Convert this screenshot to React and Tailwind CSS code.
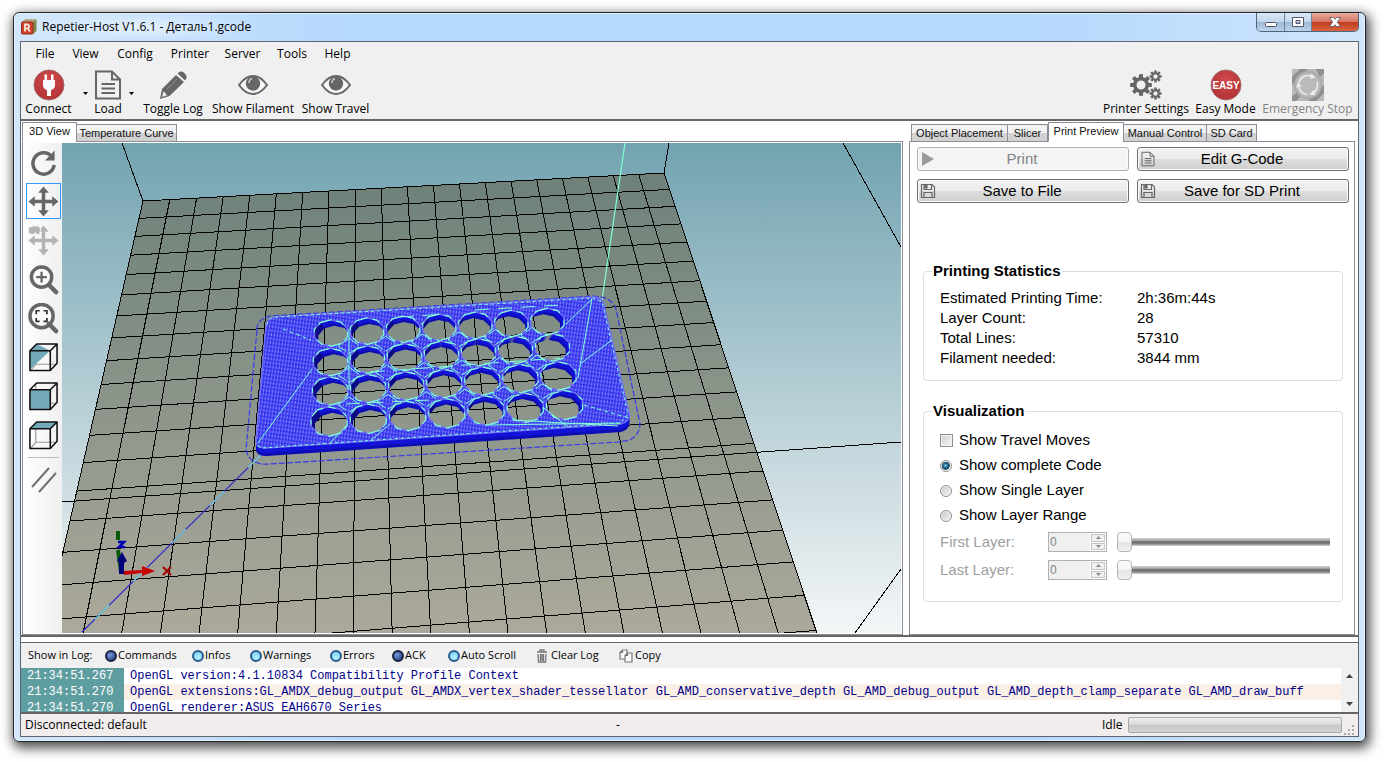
import { useState } from 'react'

const STATS = [
  ['Estimated Printing Time:', '2h:36m:44s'],
  ['Layer Count:', '28'],
  ['Total Lines:', '57310'],
  ['Filament needed:', '3844 mm'],
]

const LOG_LINES = [
  ['21:34:51.267', 'OpenGL version:4.1.10834 Compatibility Profile Context'],
  [
    '21:34:51.270',
    'OpenGL extensions:GL_AMDX_debug_output GL_AMDX_vertex_shader_tessellator GL_AMD_conservative_depth GL_AMD_debug_output GL_AMD_depth_clamp_separate GL_AMD_draw_buff',
  ],
  ['21:34:51.270', 'OpenGL renderer:ASUS EAH6670 Series'],
]

/* ---------- icons ---------- */

function AppIcon() {
  return (
    <svg className="w-4 h-4" viewBox="0 0 16 16">
      <path d="M1 3 L4 0.500 L15.500 0.500 L15.500 12 L12 15 L11 3 Z" fill="#7d8a4a" />
      <path d="M1 3 L4 0.500 L15.500 0.500 L12 3 Z" fill="#b9a183" />
      <rect x="0.5" y="3" width="11.5" height="12" rx="1" fill="#d0412b" stroke="#93301f" />
      <path d="M4 12.500 V5.500 H6.800 A2 2 0 0 1 6.800 9.300 H4 M6.500 9.300 L9 12.500" fill="none" stroke="#fbe9dc" strokeWidth="1.800" />
    </svg>
  )
}

function RedDisc({ children }) {
  return (
    <svg className="w-8 h-8" viewBox="0 0 32 32">
      <defs>
        <radialGradient id="disc" cx="0.5" cy="0.35" r="0.65">
          <stop offset="0" stopColor="#cf4a4c" />
          <stop offset="1" stopColor="#b43336" />
        </radialGradient>
      </defs>
      <circle cx="16" cy="16" r="15" fill="url(#disc)" stroke="#a5686a" strokeWidth="1" />
      {children}
    </svg>
  )
}

function DocIcon({ className }) {
  return (
    <svg className={className} viewBox="0 0 32 32" fill="none" stroke="#666" strokeWidth="2">
      <path d="M4 2.500 H20 L28 10.500 V29.500 H4 Z" />
      <path d="M20 2.500 V10.500 H28" />
      <path d="M9.500 15 H23 M9.500 19.500 H23 M9.500 24 H23" strokeWidth="2.200" />
    </svg>
  )
}

function PencilIcon() {
  return (
    <svg className="w-8 h-8" viewBox="0 0 32 32">
      <path d="M3 30 L5 20 L19 6 L27 13 L12.500 27 Z" fill="#666" />
      <path d="M20.500 4.500 L22.500 2.800 Q24.500 1.800 26.500 3.300 L29 6 Q30.500 8 29 10 L28 11.500 Z" fill="#666" />
      <path d="M5 28 L6.500 22.500 L8 23.500 L8.500 25 L10.500 26 Z" fill="#efefef" />
      <path d="M10 20 L20 10" stroke="#8a8a8a" strokeWidth="1" />
    </svg>
  )
}

function EyeIcon() {
  return (
    <svg className="w-8 h-8" viewBox="0 0 32 32">
      <path d="M2 16 Q8.500 7 16 7 Q23.500 7 30 16 Q23.500 25 16 25 Q8.500 25 2 16 Z" fill="#f7f7f7" stroke="#666" strokeWidth="2" />
      <circle cx="16" cy="14.500" r="7.200" fill="#666" />
      <path d="M12 14 Q12 10.500 15 9.500" fill="none" stroke="#c8c8c8" strokeWidth="1.500" />
    </svg>
  )
}

function Gear({ cx, cy, r, hole, tooth }) {
  const angles = [0, 45, 90, 135, 180, 225, 270, 315]
  return (
    <g transform={`translate(${cx} ${cy})`} fill="#666">
      {angles.map((a) => (
        <rect key={a} x={-tooth / 2} y={-r - tooth * 0.7} width={tooth} height={tooth * 1.3} transform={`rotate(${a})`} />
      ))}
      <circle r={(r + hole) / 2} fill="none" stroke="#666" strokeWidth={r - hole} />
    </g>
  )
}

function GearsIcon() {
  return (
    <svg className="w-8 h-8" viewBox="0 0 32 32">
      <Gear cx={11} cy={16} r={8} hole={4.5} tooth={4} />
      <Gear cx={25.5} cy={7.5} r={4.300} hole={2.200} tooth={2.500} />
      <Gear cx={25.5} cy={24.500} r={4.300} hole={2.200} tooth={2.500} />
    </svg>
  )
}

function StopIcon() {
  return (
    <svg className="w-8 h-8" viewBox="0 0 32 32">
      <rect width="32" height="32" fill="#b9b9b9" />
      <path d="M0 8 L8 0 H16 L0 16 Z M24 0 H32 L32 4 L28 8 Z M0 27 L5 24 L8 28 L4 32 H0 Z M16 32 L32 16 V24 L24 32 Z" fill="#8f8f8f" />
      <circle cx="16" cy="16" r="14" fill="#a9a9a9" />
      <circle cx="16" cy="16" r="12.500" fill="#bababa" />
      <g fill="none" stroke="#ececec" strokeWidth="1.600">
        <path d="M7 13 A9.500 9.500 0 0 1 20 7.400" />
        <path d="M25 13 A9.500 9.500 0 0 1 20 24.700" />
        <path d="M15 25.500 A9.500 9.500 0 0 1 6.500 16" />
      </g>
      <path d="M19 4.500 L23.500 8.500 L18 10 Z M22 20.500 L17.500 25.500 L23.500 26.500 Z M4 18.500 L6.500 13 L9.500 17.500 Z" fill="#ececec" />
    </svg>
  )
}

function FloppyIcon() {
  return (
    <svg className="w-4 h-4" viewBox="0 0 16 16" fill="none" stroke="#666" strokeWidth="1.200">
      <path d="M1.500 1.500 H12 L14.500 4 V14.500 H1.500 Z" />
      <path d="M4 1.500 V6.500 H11.500 V1.500" />
      <path d="M5 2 H7 V5 H5 Z" fill="#666" />
      <path d="M4 14.500 V9.500 H12 V14.500" />
    </svg>
  )
}

const RotateIcon = (
  <>
    <path d="M25 10.500 A11 11 0 1 0 27 18.500" fill="none" stroke="#666" strokeWidth="3.600" />
    <path d="M27.500 3.500 V14 H17.500 Z" fill="#666" />
  </>
)

const MOVE_PATH =
  'M16 0.500 L21.500 7 H17.800 V14.200 H25 V10.500 L31.500 16 L25 21.500 V17.800 H17.800 V25 H21.500 L16 31.500 L10.500 25 H14.200 V17.800 H7 V21.500 L0.500 16 L7 10.500 V14.200 H14.200 V7 H10.500 Z'

function Magnifier({ r, children }) {
  return (
    <>
      <circle cx="14" cy="13.500" r={r} fill="#fafafa" stroke="#666" strokeWidth="3.600" />
      <path d="M21.500 21.500 L29 29" stroke="#666" strokeWidth="4.500" strokeLinecap="round" />
      {children}
    </>
  )
}

function Cube({ fill }) {
  return (
    <>
      <path d="M8 2 V23 H30 M8 23 L2 30" fill="none" stroke="#999" strokeWidth="1.200" />
      {fill}
      <g fill="none" stroke="#111" strokeWidth="1.600" strokeLinejoin="round">
        <path d="M2 9 H23 V29.500 H2 Z" />
        <path d="M2 9 L9 2 H30 V22 L23 29.500 M23 9 L30 2" />
      </g>
    </>
  )
}

const VIEW_TOOLS = [
  { name: 'Rotate', art: RotateIcon },
  { name: 'Move view', art: <path d={MOVE_PATH} fill="#666" /> },
  {
    name: 'Move object',
    art: (
      <g fill="#b4b4b4">
        <path d={MOVE_PATH} />
        <path d="M0 3 Q4 0 11 1 L13 4 L12 10 H9 L8 8 L5 10 L1 9 Z" stroke="#f6f6f6" />
      </g>
    ),
  },
  {
    name: 'Zoom',
    art: (
      <Magnifier r={10.5}>
        <path d="M14 8 V19 M8.500 13.500 H19.500" stroke="#666" strokeWidth="2.400" />
      </Magnifier>
    ),
  },
  {
    name: 'Fit',
    art: (
      <Magnifier r={12}>
        <path d="M8.500 11.500 V8 H12 M16 8 H19.500 V11.500 M19.500 15.500 V19 H16 M12 19 H8.500 V15.500" fill="none" stroke="#333" strokeWidth="1.800" />
      </Magnifier>
    ),
  },
  { name: 'Isometric view', art: <Cube fill={<path d="M2 9 H23 L2 28 Z M9 2 L23 9 H2 Z" fill="#72a9b8" />} /> },
  { name: 'Front view', art: <Cube fill={<path d="M2 9 H23 V29.500 H2 Z" fill="#72a9b8" />} /> },
  { name: 'Top view', art: <Cube fill={<path d="M2 9 L9 2 H30 L23 9 Z" fill="#72a9b8" />} /> },
]

/* ---------- 3D scene ---------- */

// Projective map from the unit square to four screen corners
function makeProjector([p0, p1, p2, p3]) {
  const dx1 = p1[0] - p2[0]
  const dx2 = p3[0] - p2[0]
  const dy1 = p1[1] - p2[1]
  const dy2 = p3[1] - p2[1]
  const sx = p0[0] - p1[0] + p2[0] - p3[0]
  const sy = p0[1] - p1[1] + p2[1] - p3[1]
  const det = dx1 * dy2 - dx2 * dy1
  const g = (sx * dy2 - dx2 * sy) / det
  const h = (dx1 * sy - sx * dy1) / det
  return (u, v) => {
    const w = g * u + h * v + 1
    const x = ((p1[0] - p0[0] + g * p1[0]) * u + (p3[0] - p0[0] + h * p3[0]) * v + p0[0]) / w
    const y = ((p1[1] - p0[1] + g * p1[1]) * u + (p3[1] - p0[1] + h * p3[1]) * v + p0[1]) / w
    return [x, y]
  }
}

const bed = makeProjector([
  [143, 201],
  [664, 173],
  [763, 471],
  [70, 521],
])

const fmt = ([x, y]) => `${x.toFixed(1)} ${y.toFixed(1)}`
const segment = (a, b) => `M${fmt(a)} L${fmt(b)}`

const BED_ROWS = 20
const gridPath = [
  ...Array.from({ length: 21 }, (_, i) => segment(bed(i / 20, 0), bed(i / 20, BED_ROWS / 14))),
  ...Array.from({ length: BED_ROWS + 1 }, (_, j) => segment(bed(0, j / 14), bed(1, j / 14))),
].join(' ')
const bedOutline = `M${[bed(0, 0), bed(1, 0), bed(1, BED_ROWS / 14), bed(0, BED_ROWS / 14)].map(fmt).join(' L')} Z`

// Centres of the first and last hole in every row of the plate
const HOLE_ROWS = [
  [331, 333, 547.5, 321.5],
  [330.5, 362, 552.5, 347.5],
  [330, 391, 558.5, 376],
  [329, 421.5, 564.5, 405],
]

const holes = HOLE_ROWS.flatMap(([x0, y0, x1, y1], row) =>
  Array.from({ length: 7 }, (_, col) => ({
    row,
    col,
    x: x0 + ((x1 - x0) * col) / 6,
    y: y0 + ((y1 - y0) * col) / 6,
    rx: 17.4 + row * 0.5,
    ry: 13.2 + row * 0.5,
  })),
)

const holePoints = (hole, depth) =>
  Array.from({ length: 10 }, (_, i) => {
    const a = ((i * 36 + 16) * Math.PI) / 180
    return [
      hole.x + Math.cos(a) * hole.rx + (3 - hole.col) * 0.16 * depth,
      hole.y + Math.sin(a) * hole.ry + depth * 0.75,
    ]
  })

const holePath = (hole, depth) => `M${holePoints(hole, depth).map(fmt).join(' L')} Z`

// Left facets of a hole wall face away from the light
function leftWallPath(hole) {
  const top = holePoints(hole, 0).slice(4, 7)
  const bottom = holePoints(hole, 8).slice(4, 7).reverse()
  return `M${[...top, ...bottom].map(fmt).join(' L')} Z`
}

function platePath(depth) {
  const d = depth
  const outline = `M266 ${325 + d} Q267 ${318 + d} 275 ${317 + d} L593 ${297 + d} Q602 ${297 + d} 604 ${305 + d} L629 ${413 + d} Q631 ${421 + d} 621 ${424 + d} L267 ${448 + d} Q256 ${449 + d} 256 ${440 + d} Z`
  return [outline, ...holes.map((hole) => holePath(hole, depth))].join(' ')
}

// Infill diamonds sit where four holes meet
const diamonds = holes
  .filter((hole) => hole.col < 6 && hole.row < 3)
  .map((hole) => {
    const next = holes.find((o) => o.row === hole.row + 1 && o.col === hole.col + 1)
    const x = (hole.x + next.x) / 2
    const y = (hole.y + next.y) / 2
    return `M${fmt([x, y - 8])} L${fmt([x + 11, y])} L${fmt([x, y + 7])} L${fmt([x - 11, y])} Z`
  })
  .join(' ')

function Scene() {
  return (
    <svg
      className="flex-1 min-w-0 min-h-0 h-full"
      viewBox="62 143 839 490"
      preserveAspectRatio="xMinYMin slice"
      role="img"
      aria-label="Tool path preview on the print bed"
    >
      <defs>
        <linearGradient id="sky" x1="0" y1="0" x2="0" y2="1">
          <stop offset="0" stopColor="#72a3b1" />
          <stop offset="1" stopColor="#f4f6f7" />
        </linearGradient>
        <linearGradient id="bed" gradientUnits="userSpaceOnUse" x1="0" y1="173" x2="0" y2="633">
          <stop offset="0" stopColor="#6d8179" />
          <stop offset="1" stopColor="#aba99b" />
        </linearGradient>
        <pattern id="infill" width="3" height="4" patternUnits="userSpaceOnUse" patternTransform="rotate(8)">
          <rect width="3" height="4" fill="#3434ee" />
          <rect width="1" height="3" fill="#7c7cf8" />
          <rect x="2" y="1" width="1" height="2" fill="#5454f4" />
        </pattern>
      </defs>
      <rect x="62" y="143" width="839" height="490" fill="url(#sky)" />
      <g stroke="#000" strokeWidth="1" fill="none" shapeRendering="crispEdges">
        <path d="M122 143 L143 201 M669 143 L664 173 M843 143 L901 247" />
        <path d="M901 569 L855 633" />
        <path d={bedOutline} fill="url(#bed)" />
        <path d={gridPath} />
        <path d="M62 502 L901 442" />
      </g>

      <g fill="none" strokeWidth="1.200">
        <path d="M82 632 L262 454" stroke="#3030c8" />
        <path d="M82 632 L262 454" stroke="#7fe0e0" strokeDasharray="20 34" strokeDashoffset="-18" />
        <path d="M625 143 L602 300" stroke="#7fffd4" />
        <path
          d="M257 330 Q256 320 270 316 L594 296 Q612 297 616 309 L640 424 Q640 434 630 440 Q626 441 618 442 L270 464 Q250 466 246 450 Z"
          stroke="#3a3ae6"
          strokeDasharray="6 2"
        />
      </g>

      <g fillRule="evenodd">
        {[8, 7, 6, 5, 4, 3, 2, 1].map((depth) => (
          <path key={depth} d={platePath(depth)} fill={depth > 5 ? '#0e0eb4' : '#1414d8'} />
        ))}
        <path d={holes.map(leftWallPath).join(' ')} fill="#0a0a86" fillRule="nonzero" />
        <path d={platePath(0)} fill="url(#infill)" stroke="#7070f4" strokeWidth="1.400" />
      </g>

      <g fill="none" stroke="#7fffd4">
        <path d={holes.map((hole) => holePath(hole, 0)).join(' ')} strokeWidth="1.200" strokeDasharray="5 4 14 5 8 9" />
        <path d={diamonds} strokeWidth="1" strokeDasharray="12 3" />
        <path d="M267 325 Q268 318 276 317 L593 298 L602 302 L628 414 L620 423 L262 448 L257 446" strokeWidth="1" strokeDasharray="3 3" />
        <path d="M258 443 L312 369 M592 299 L566 324 M592 299 L578 378 M612 340 L580 364 M349 329 V390" strokeWidth="1" />
        <path d="M283 329 L311 340 M584 405 L629 418" strokeWidth="1" strokeDasharray="4 3" />
        <path d="M544 408 L568 427 M490 425 L621 423 M512 420 L618 426 M370 441 L390 424 M330 443 L347 425" strokeWidth="1" />
        <path d="M346 404 L430 400 M370 372 L560 358 M400 317 L445 314 M475 310 L560 305" strokeWidth="1" strokeDasharray="14 9" />
      </g>

      {/* axis cross */}
      <g>
        <path d="M118 531 V540 M118 550 L121 572" stroke="#0a5a0a" strokeWidth="4" />
        <path d="M118 542 H124 L119 547 H125" fill="none" stroke="#0000b4" strokeWidth="2.500" />
        <path d="M119 574 V562 L117 561 L122 552 L127 561 L124 563 V574 Z" fill="#00007a" />
        <path d="M124 571 L142 570 V566 L155 571 L142 576 V573 L124 575 Z" fill="#c40000" />
        <path d="M163 567 L171 575 M171 567 L163 575" stroke="#a80000" strokeWidth="2" />
      </g>
    </svg>
  )
}

/* ---------- controls ---------- */

function ToolButton({ icon, label, width, disabled }) {
  return (
    <button
      type="button"
      disabled={disabled}
      className={`flex flex-col items-center shrink-0 whitespace-nowrap disabled:text-[#838383] ${width}`}
    >
      {icon}
      <span className="leading-4">{label}</span>
    </button>
  )
}

function MenuArrow() {
  return (
    <button type="button" aria-label="More" className="w-[22px] h-12 flex items-center justify-center shrink-0">
      <svg className="w-[5px] h-[3px]" viewBox="0 0 5 3">
        <path d="M0 0 H5 L2.500 3 Z" fill="#000" />
      </svg>
    </button>
  )
}

function Tabs({ items, active, onSelect, inset }) {
  return (
    <div role="tablist" className={`flex items-end h-5 -mb-px z-10 text-[11px] text-[#111] ${inset}`}>
      {items.map(([label, width]) => (
        <button
          key={label}
          type="button"
          role="tab"
          aria-selected={label === active}
          onClick={() => onSelect(label)}
          className={`shrink-0 whitespace-nowrap border border-[#8b8d98] ${width} ${
            label === active
              ? 'h-5 bg-white border-b-white pb-1'
              : 'h-[18px] -ml-px bg-linear-to-b from-[#f2f2f2] from-50% to-[#d2d2d2] to-50%'
          }`}
        >
          {label}
        </button>
      ))}
    </div>
  )
}

function ActionButton({ icon, label, disabled }) {
  return (
    <button
      type="button"
      disabled={disabled}
      className="grid grid-cols-[18px_1fr_20px] items-center h-6 px-px rounded-[3px] border border-[#707070] bg-[linear-gradient(#f2f2f2,#ebebeb_50%,#dddddd_50%,#cfcfcf)] text-[15px] shadow-[inset_0_0_0_1px_#fbfbfb] disabled:border-[#adb2b5] disabled:bg-none disabled:bg-[#f4f4f4] disabled:text-[#838383]"
    >
      <span className="flex justify-center">{icon}</span>
      <span>{label}</span>
    </button>
  )
}

function Group({ title, children }) {
  return (
    <fieldset className="rounded-[4px] border border-[#d5dfe5] px-4">
      <legend className="-ml-2 px-px text-[15px] leading-5 font-bold">{title}</legend>
      {children}
    </fieldset>
  )
}

function LayerRow({ id, label }) {
  return (
    <div className="flex items-center h-7 text-[#a0a0a0]">
      <label htmlFor={id} className="w-[108px]">
        {label}
      </label>
      <span className="flex w-[59px] h-5 border border-[#adb2b5] bg-[#f0f0f0]">
        <input
          id={id}
          type="text"
          disabled
          defaultValue="0"
          className="w-0 flex-1 pl-px bg-transparent text-[12px] leading-4 text-[#838383]"
        />
        <span className="flex flex-col w-4 p-px gap-px bg-white">
          {['M0 3 L2.500 0 L5 3 Z', 'M0 0 L2.500 3 L5 0 Z'].map((d) => (
            <button
              key={d}
              type="button"
              disabled
              aria-label="Change value"
              className="flex-1 flex items-center justify-center border border-[#c4c4c4] bg-[#f0f0f0]"
            >
              <svg className="w-[5px] h-[3px]" viewBox="0 0 5 3">
                <path d={d} fill="#8a8a8a" />
              </svg>
            </button>
          ))}
        </span>
      </span>
      <input
        type="range"
        disabled
        min="0"
        max="28"
        defaultValue="0"
        aria-label={label}
        className="ml-[10px] mr-[-4px] flex-1 min-w-0 h-5 appearance-none bg-transparent [&::-webkit-slider-runnable-track]:h-[8px] [&::-webkit-slider-runnable-track]:bg-[linear-gradient(#d4d4d4,#a8a8a8_30%,#636363_50%,#8c8c8c_75%,#d4d4d4)] [&::-webkit-slider-thumb]:appearance-none [&::-webkit-slider-thumb]:w-[15px] [&::-webkit-slider-thumb]:h-5 [&::-webkit-slider-thumb]:-mt-[6px] [&::-webkit-slider-thumb]:rounded-[4px] [&::-webkit-slider-thumb]:border [&::-webkit-slider-thumb]:border-[#b4b8ba] [&::-webkit-slider-thumb]:bg-[linear-gradient(#fafafa,#f4f4f4_50%,#e4e4e4_50%,#f0f0f0)]"
      />
    </div>
  )
}

function PrintPreview() {
  const [mode, setMode] = useState('Show complete Code')
  const [travel, setTravel] = useState(false)

  return (
    <div className="flex-1 min-h-0 border border-[#8b8d98] pt-[5px] pl-[7px] pr-[5px] flex flex-col text-[15px]">
      <div className="grid grid-cols-2 gap-2">
        <ActionButton
          disabled
          label="Print"
          icon={
            <svg className="w-[14px] h-[14px]" viewBox="0 0 14 14">
              <path d="M1 0 L13 7 L1 14 Z" fill="#9b9b9b" />
            </svg>
          }
        />
        <ActionButton label="Edit G-Code" icon={<DocIcon className="w-4 h-4" />} />
        <ActionButton label="Save to File" icon={<FloppyIcon />} />
        <ActionButton label="Save for SD Print" icon={<FloppyIcon />} />
      </div>

      <div className="flex flex-col gap-5 mt-[58px] mx-[6px]">
        <Group title="Printing Statistics">
          <dl className="grid grid-cols-[197px_1fr] leading-5 pt-[7px] pb-3">
            {STATS.map(([name, value]) => (
              <div key={name} className="contents">
                <dt>{name}</dt>
                <dd>{value}</dd>
              </div>
            ))}
          </dl>
        </Group>

        <Group title="Visualization">
          <div className="flex flex-col pt-[7px] pb-[17px]">
            <label className="flex items-center gap-[6px] h-[25px]">
              <input
                type="checkbox"
                checked={travel}
                onChange={(e) => setTravel(e.target.checked)}
                className="appearance-none w-[13px] h-[13px] border border-[#8e8f8f] bg-linear-to-br from-[#cdcfd2] to-[#f6f6f6] shadow-[inset_0_0_0_1px_#f4f4f4] checked:bg-[#1e5f8a]"
              />
              Show Travel Moves
            </label>
            {['Show complete Code', 'Show Single Layer', 'Show Layer Range'].map((name) => (
              <label key={name} className="flex items-center gap-[6px] h-[25px]">
                <input
                  type="radio"
                  name="visible-code"
                  checked={mode === name}
                  onChange={() => setMode(name)}
                  className="appearance-none w-3 h-3 mr-px rounded-full border border-[#8e8f8f] bg-linear-to-br from-[#c4c7ca] to-[#f6f6f6] shadow-[inset_0_0_0_1px_#f4f4f4] checked:bg-[radial-gradient(circle_at_45%_45%,#7fd0f0,#10527c_35%,#0c3350_50%,#f4f4f4_60%)]"
                />
                {name}
              </label>
            ))}
            <LayerRow id="first-layer" label="First Layer:" />
            <LayerRow id="last-layer" label="Last Layer:" />
          </div>
        </Group>
      </div>
    </div>
  )
}

/* ---------- log ---------- */

const LOG_FILTERS = [
  { label: 'Commands', width: 'w-[87px]', on: false },
  { label: 'Infos', width: 'w-[58px]', on: true },
  { label: 'Warnings', width: 'w-[80px]', on: true },
  { label: 'Errors', width: 'w-[62px]', on: true },
  { label: 'ACK', width: 'w-[56px]', on: false },
  { label: 'Auto Scroll', width: 'w-[88px]', on: true },
]

function LogBar() {
  const [filters, setFilters] = useState(LOG_FILTERS)

  const toggle = (label) => {
    setFilters(filters.map((f) => (f.label === label ? { ...f, on: !f.on } : f)))
  }

  return (
    <div className="flex items-center h-[25px] pl-[7px] bg-[#f0f0f0] whitespace-nowrap text-[11px]">
      <span className="w-[77px] shrink-0">Show in Log:</span>
      {filters.map((f) => (
        <button
          key={f.label}
          type="button"
          aria-pressed={f.on}
          onClick={() => toggle(f.label)}
          className={`flex items-center gap-px shrink-0 ${f.width}`}
        >
          <span
            className={`w-3 h-3 rounded-full border-2 shrink-0 ${
              f.on
                ? 'border-[#2d5c8c] bg-[radial-gradient(circle_at_50%_70%,#b8f4ff,#6cc4f4)]'
                : 'border-[#1a2440] bg-[radial-gradient(circle_at_35%_35%,#7a9ae0,#1c3478)]'
            }`}
          />
          {f.label}
        </button>
      ))}
      <button type="button" className="flex items-center gap-[3px] w-[83px] shrink-0">
        <svg className="w-3 h-[14px]" viewBox="0 0 12 14" fill="none" stroke="#777" strokeWidth="1.300">
          <path d="M1 3 H11 M4 3 V1 H8 V3 M2 5 L2.500 13 H9.500 L10 5 M4.500 5 V12 M6 5 V12 M7.500 5 V12" />
        </svg>
        Clear Log
      </button>
      <button type="button" className="flex items-center gap-[2px]">
        <svg className="w-[14px] h-[14px]" viewBox="0 0 14 14" fill="#fafafa" stroke="#777" strokeWidth="1.200">
          <path d="M3.500 1 H8 V10 H1 V3.500 Z M3.500 1 V3.500 H1" />
          <path d="M8.500 4 H13 V13 H6 V6.500 Z M8.500 4 V6.500 H6" />
        </svg>
        Copy
      </button>
    </div>
  )
}

function Log() {
  return (
    <div className="flex h-11 overflow-hidden bg-white">
      <div className="flex-1 min-w-0 overflow-hidden font-['Liberation_Mono',monospace] text-[12px] leading-4 whitespace-pre">
        {LOG_LINES.map(([time, text], i) => (
          <div key={i} className="flex even:bg-[#faf0e6]">
            <span className="w-[103px] shrink-0 pl-[6px] bg-[#5f9ea0] text-white">{time}</span>
            <span className="pl-[6px] text-[#00008b]">{text}</span>
          </div>
        ))}
      </div>
      <div className="w-[17px] flex flex-col justify-between items-center py-[6px] bg-[#f0f0f0]">
        <svg className="w-[7px] h-1" viewBox="0 0 7 4">
          <path d="M0 4 L3.500 0 L7 4 Z" fill="#444" />
        </svg>
        <svg className="w-[7px] h-1" viewBox="0 0 7 4">
          <path d="M0 0 L3.500 4 L7 0 Z" fill="#444" />
        </svg>
      </div>
    </div>
  )
}

/* ---------- window ---------- */

function TitleBar() {
  return (
    <header className="flex items-start h-7 pl-[7px] pr-[6px]">
      <div className="flex items-center gap-[5px] h-7 w-60 shrink-0 whitespace-nowrap bg-[radial-gradient(closest-side,rgba(255,255,255,0.5),transparent)]">
        <AppIcon />
        <h1>Repetier-Host V1.6.1 - Деталь1.gcode</h1>
      </div>
      <div className="flex ml-auto h-[19px] rounded-b-[5px] border border-t-0 border-[#4e6580] overflow-hidden">
        <button
          type="button"
          aria-label="Minimize"
          className="w-7 flex items-center justify-center border-r border-[#6b829c] bg-[linear-gradient(#dbe8f6,#c3d6ea_50%,#9db6d2_50%,#bcd4ec)]"
        >
          <svg className="w-3 h-3" viewBox="0 0 12 12">
            <rect x="0.5" y="6.500" width="11" height="4" rx="1" fill="#fff" stroke="#535666" />
          </svg>
        </button>
        <button
          type="button"
          aria-label="Maximize"
          className="w-[27px] flex items-center justify-center border-r border-[#6b829c] bg-[linear-gradient(#dbe8f6,#c3d6ea_50%,#9db6d2_50%,#bcd4ec)]"
        >
          <svg className="w-3 h-[10px]" viewBox="0 0 12 10">
            <path d="M0.500 0.500 H11.500 V9.500 H0.500 Z M4 3.500 V6.500 H8 V3.500 Z" fill="#fff" fillRule="evenodd" stroke="#535666" />
          </svg>
        </button>
        <button
          type="button"
          aria-label="Close"
          className="w-[46px] flex items-center justify-center bg-[linear-gradient(#e9a99c,#d6745f_50%,#bf3a20_50%,#d9653f)]"
        >
          <svg className="w-3 h-[10px]" viewBox="0 0 12 10">
            <path d="M0.500 0.500 H4.500 L6 2.300 L7.500 0.500 H11.500 L8.300 5 L11.500 9.500 H7.500 L6 7.700 L4.500 9.500 H0.500 L3.700 5 Z" fill="#fff" stroke="#535666" strokeWidth="0.800" />
          </svg>
        </button>
      </div>
    </header>
  )
}

function Toolbar() {
  return (
    <div className="flex items-start h-[53px] pt-[3px] pr-[3px] pl-[2px]">
      <ToolButton
        label="Connect"
        width="w-[51px]"
        icon={
          <RedDisc>
            <path d="M10 11 H22 V16 Q22 20 18 21 V27 H14 V21 Q10 20 10 16 Z M11.500 5.500 H14 V12 H11.500 Z M18 5.500 H20.500 V12 H18 Z" fill="#fff" />
          </RedDisc>
        }
      />
      <MenuArrow />
      <ToolButton label="Load" width="w-[24px]" icon={<DocIcon className="w-8 h-8" />} />
      <MenuArrow />
      <ToolButton label="Toggle Log" width="w-[62px]" icon={<PencilIcon />} />
      <ToolButton label="Show Filament" width="w-[98px]" icon={<EyeIcon />} />
      <ToolButton label="Show Travel" width="w-[67px]" icon={<EyeIcon />} />
      <span className="flex-1" />
      <ToolButton label="Printer Settings" width="w-[90px]" icon={<GearsIcon />} />
      <ToolButton
        label="Easy Mode"
        width="w-[69px]"
        icon={
          <RedDisc>
            <text x="16" y="20" textAnchor="middle" fill="#fff" className="font-['Liberation_Sans',sans-serif] text-[10px] font-bold">
              EASY
            </text>
          </RedDisc>
        }
      />
      <ToolButton label="Emergency Stop" width="w-[95px]" icon={<StopIcon />} disabled />
    </div>
  )
}

const MENU = [
  ['File', 'w-[38px]'],
  ['View', 'w-[43px]'],
  ['Config', 'w-[56px]'],
  ['Printer', 'w-[54px]'],
  ['Server', 'w-[51px]'],
  ['Tools', 'w-[48px]'],
  ['Help', 'w-[43px]'],
]

export default function App() {
  const [leftTab, setLeftTab] = useState('3D View')
  const [rightTab, setRightTab] = useState('Print Preview')

  return (
    <div className="h-screen flex flex-col pt-3 pb-5 pl-[13px] pr-[18px] bg-white overflow-hidden font-['Open_Sans','Noto_Sans',sans-serif] text-[12px] text-black">
      <div className="flex-1 min-h-0 flex flex-col rounded-[6px] border border-[#20262e] bg-[linear-gradient(to_right,#d3e7fb,#b5d8fd_25%,#b5d8fd_75%,#cfe5fb)] shadow-[2px_4px_12px_2px_rgba(0,0,0,0.7),inset_0_0_0_1px_#e6f3ff]">
        <TitleBar />
        <div className="flex-1 min-h-0 flex flex-col mx-[6px] mb-1 border border-[#5e6470] bg-[#f0f0f0]">
          <nav className="flex items-center h-6 pl-[5px]">
            {MENU.map(([label, width]) => (
              <button key={label} type="button" className={width}>
                {label}
              </button>
            ))}
          </nav>
          <Toolbar />

          <main className="flex-1 min-h-0 flex gap-[6px] border-y-2 border-[#666] bg-white pt-px pl-px pr-[3px] font-['Liberation_Sans',Arial,sans-serif]">
            <section className="flex-1 min-w-0 min-h-0 flex flex-col">
              <Tabs
                items={[
                  ['3D View', 'w-[55px]'],
                  ['Temperature Curve', 'w-[101px]'],
                ]}
                active={leftTab}
                onSelect={setLeftTab}
                inset=""
              />
              <div className="flex-1 min-h-0 flex border border-[#8b8d98] p-px pl-[3px]">
                <div className="w-9 shrink-0 flex flex-col items-start gap-[3px] pt-px bg-linear-to-r from-[#fdfdfd] to-[#f0f0f0]">
                  {VIEW_TOOLS.map((tool) => (
                    <button
                      key={tool.name}
                      type="button"
                      aria-label={tool.name}
                      className={`w-[35px] h-9 flex items-center justify-center shrink-0 border ${
                        tool.name === 'Move view' ? 'border-[#3399ff]' : 'border-transparent'
                      }`}
                    >
                      <svg className="w-[31px] h-[31px]" viewBox="0 0 32 32">
                        {tool.art}
                      </svg>
                    </button>
                  ))}
                  <hr className="w-[31px] ml-[2px] my-px border-[#bdbdbd]" />
                  <button type="button" aria-label="Parallel projection" className="w-[35px] h-9 flex items-center justify-center">
                    <svg className="w-[26px] h-[26px]" viewBox="0 0 26 26" stroke="#707070" strokeWidth="2">
                      <path d="M1 20 L18 1 M8 25 L25 6" />
                    </svg>
                  </button>
                </div>
                <Scene />
              </div>
            </section>

            <section className="w-[446px] shrink-0 flex flex-col">
              <Tabs
                items={[
                  ['Object Placement', 'w-[97px]'],
                  ['Slicer', 'w-[41px]'],
                  ['Print Preview', 'w-[76px]'],
                  ['Manual Control', 'w-[84px]'],
                  ['SD Card', 'w-[51px]'],
                ]}
                active={rightTab}
                onSelect={setRightTab}
                inset="pl-[3px]"
              />
              <PrintPreview />
            </section>
          </main>

          <section className="mt-[5px] border-t border-[#666] shadow-[0_-5px_0_#fff]">
            <LogBar />
            <Log />
          </section>

          <footer className="flex items-center h-6 pl-1 pr-[3px] border-t-2 border-[#666] bg-[#f1edec] whitespace-nowrap">
            <span className="w-4/9">Disconnected: default</span>
            <span className="flex-1">-</span>
            <span className="w-[26px]">Idle</span>
            <span
              role="progressbar"
              aria-label="Progress"
              aria-valuenow={0}
              className="w-[214px] h-4 rounded-[2px] border border-[#a8a8a8] bg-[linear-gradient(#f0f0f0,#dadada_45%,#c6c6c6_50%,#d4d4d4)]"
            />
            <svg className="w-[13px] h-4 self-end" viewBox="0 0 13 16" fill="#a9a9a9">
              <path d="M10 5 h2 v2 h-2 Z M6 9 h2 v2 h-2 Z M10 9 h2 v2 h-2 Z M2 13 h2 v2 h-2 Z M6 13 h2 v2 h-2 Z M10 13 h2 v2 h-2 Z" />
            </svg>
          </footer>
        </div>
      </div>
    </div>
  )
}
